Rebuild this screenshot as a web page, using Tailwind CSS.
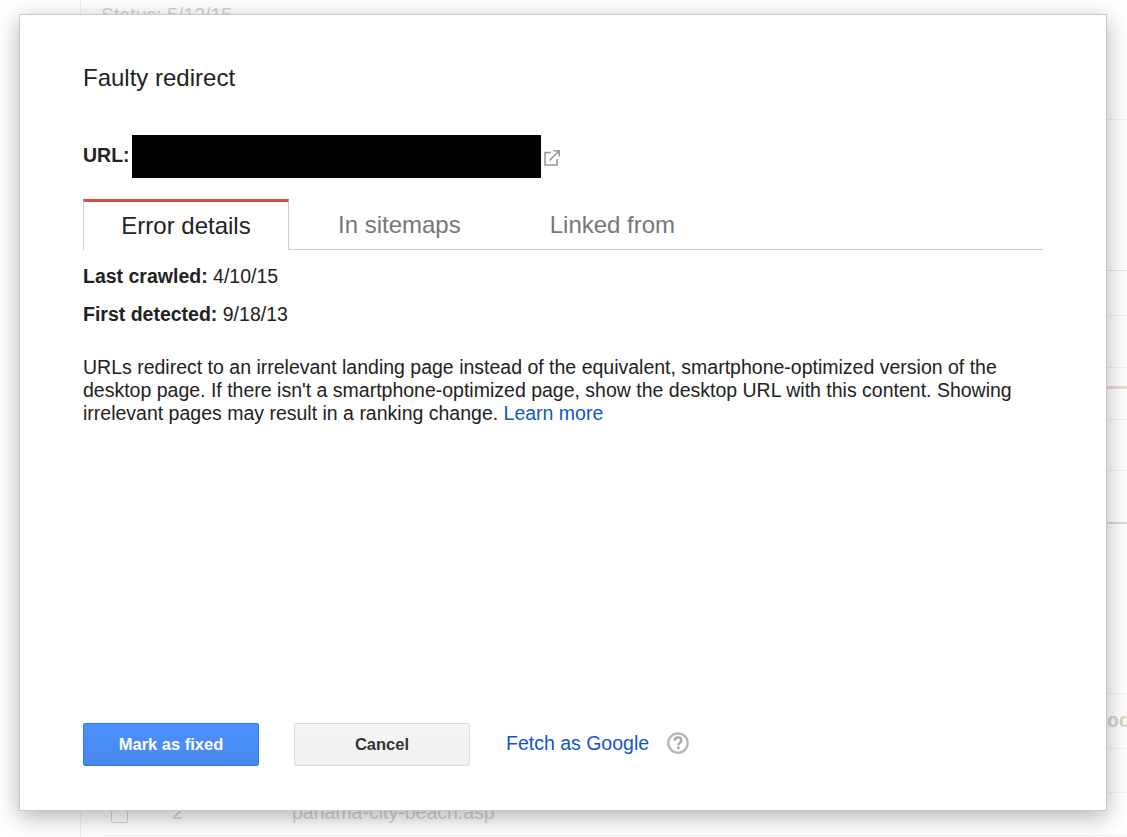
<!DOCTYPE html>
<html lang="en">
<head>
    <meta charset="UTF-8">
    <title>Faulty redirect</title>
    <script src="https://cdn.jsdelivr.net/npm/@tailwindcss/browser@4"></script>
</head>
<body class="bg-white font-['Liberation_Sans',Arial,sans-serif] overflow-hidden">
    <!-- Page behind the dialog -->
    <div class="h-[837px] ml-[80px] border-l border-[#f1f1f1] text-[#d4d4d4] overflow-hidden">
        <div class="h-[120px] pl-[20px] border-b border-[#f1f1f1] text-[19.5px] leading-[30px]">Status: 5/12/15</div>
        <div class="h-[151px] border-b border-[#e8e8e8]"></div>
        <div class="h-[45px] border-b border-[#f1f1f1]"></div>
        <div class="h-[52px] border-b border-[#f1f1f1]"></div>
        <div class="h-[21px] border-b-[3px] border-[#f6d5d1]"></div>
        <div class="h-[31px] border-b border-[#f1f1f1]"></div>
        <div class="h-[51px] border-b border-[#f1f1f1]"></div>
        <div class="h-[53px] border-b-2 border-[#dcdcdc]"></div>
        <div class="h-[170px] border-b border-[#f4f4f4]"></div>
        <div class="h-[55px] border-b border-[#f4f4f4] flex justify-end items-center text-[19.5px] font-bold"><span class="w-[20px] overflow-hidden whitespace-nowrap">od</span></div>
        <div class="h-[44px] border-b border-[#f4f4f4]"></div>
        <div class="flex items-center h-[43px] ml-[20px] pl-[10px] pb-[3px] border-b border-[#f4f4f4] text-[19.5px]">
            <span class="w-[17px] h-[17px] mt-[3px] border border-[#d4d4d4] rounded-[2px]"></span>
            <span class="ml-[44px] w-[120px]">2</span>
            <span>panama-city-beach.asp</span>
        </div>
    </div>

    <!-- Dialog -->
    <div class="absolute left-[19px] top-[14px] w-[1088px] h-[797px] bg-white border border-[#c8c8c8] shadow-[0_6px_22px_rgba(0,0,0,0.3)] pl-[63px] pr-[63px] flex flex-col text-[#222]">
        <h1 class="mt-[49px] text-[24px] leading-[28px]">Faulty redirect</h1>

        <div class="mt-[43px] flex items-start h-[43px]">
            <span class="mt-[8px] text-[19.5px] leading-[24px] font-bold">URL:</span>
            <div class="ml-[2px] w-[409px] h-[43px] bg-black"></div>
            <svg class="ml-[3px] mt-[15px]" width="16" height="16" viewBox="0 0 16 16" fill="none" stroke="#999" stroke-width="1.6">
                <path d="M7 2.5H1v12.5h12V9"/>
                <path d="M5.5 10.5L15 1M9.5 .8H15.2V6.5"/>
            </svg>
        </div>

        <div class="mt-[21px] flex items-end h-[51px] border-b border-[#ccc]">
            <div class="w-[206px] h-[51px] -mb-px bg-white border-x border-[#ccc] border-t-[3px] border-t-[#dd4b39] flex items-center justify-center text-[24px] text-[#222]">Error details</div>
            <div class="ml-[49px] h-[50px] pt-[2px] flex items-center text-[24px] text-[#777]">In sitemaps</div>
            <div class="ml-[89px] h-[50px] pt-[2px] flex items-center text-[24px] text-[#777]">Linked from</div>
        </div>

        <p class="mt-[14px] text-[19.5px] leading-[24px]"><b>Last crawled:</b> 4/10/15</p>
        <p class="mt-[14px] text-[19.5px] leading-[24px]"><b>First detected:</b> 9/18/13</p>
        <p class="mt-[30px] text-[19.5px] leading-[23px]">URLs redirect to an irrelevant landing page instead of the equivalent, smartphone-optimized version of the desktop page. If there isn't a smartphone-optimized page, show the desktop URL with this content. Showing irrelevant pages may result in a ranking change. <a class="text-[#1155cc]" href="#">Learn more</a></p>

        <div class="mt-auto mb-[44px] flex items-center">
            <button class="w-[176px] h-[43px] rounded-[2px] border border-[#3079ed] bg-linear-to-b from-[#4d90fe] to-[#4787ed] text-white text-[16.5px] font-bold">Mark as fixed</button>
            <button class="ml-[35px] w-[176px] h-[43px] rounded-[2px] border border-[#dcdcdc] bg-linear-to-b from-[#f5f5f5] to-[#f1f1f1] text-[#333] text-[16.5px] font-bold">Cancel</button>
            <a class="ml-[36px] -mt-[2px] text-[#1155cc] text-[19.5px]" href="#">Fetch as Google</a>
            <svg class="ml-[18px] -mt-[4px]" width="22" height="22" viewBox="0 0 22 22" fill="none">
                <circle cx="11" cy="11" r="9.7" stroke="#b5b5b5" stroke-width="2.2"/>
                <path d="M7.6 8.8C7.7 6.6 9.1 5.4 11 5.4c2 0 3.4 1.2 3.4 2.9 0 2.5-3.1 2.6-3.1 4.9" stroke="#a8a8a8" stroke-width="2.4"/>
                <rect x="10" y="14.6" width="2.6" height="2.6" fill="#a8a8a8"/>
            </svg>
        </div>
    </div>
</body>
</html>
